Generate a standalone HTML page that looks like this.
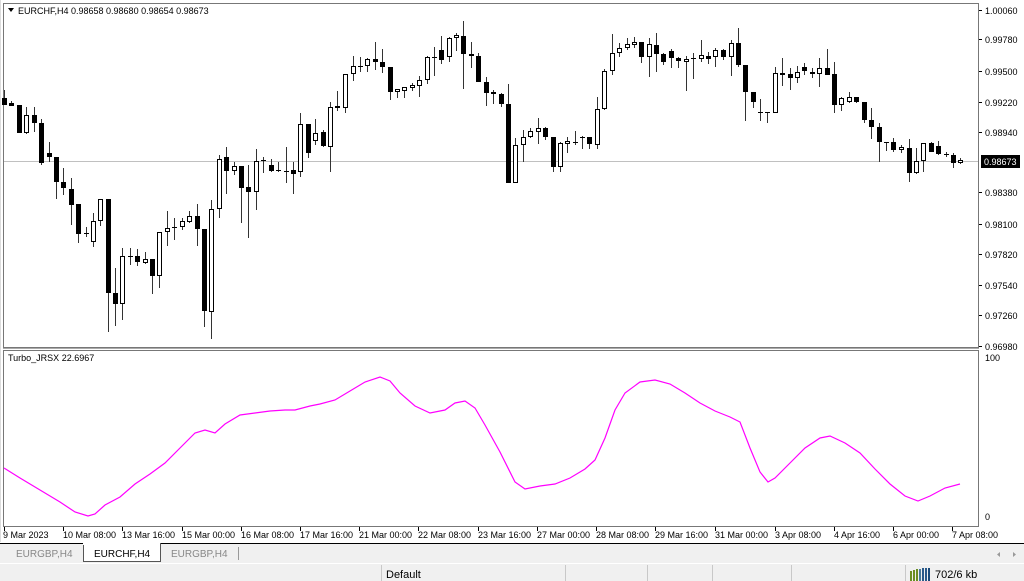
<!DOCTYPE html>
<html><head><meta charset="utf-8"><style>
html,body{margin:0;padding:0;width:1024px;height:581px;overflow:hidden;background:#fff;font-family:"Liberation Sans",sans-serif;}
svg{position:absolute;left:0;top:0}
</style></head><body>
<svg width="1024" height="581" viewBox="0 0 1024 581" xmlns="http://www.w3.org/2000/svg" font-family="Liberation Sans, sans-serif" font-size="9">
<rect x="0" y="0" width="1024" height="581" fill="#fff"/>
<rect x="3.5" y="3.5" width="975" height="344" fill="none" stroke="#777"/>
<rect x="3.5" y="350.5" width="975" height="176" fill="none" stroke="#777"/>
<line x1="3" y1="348.5" x2="979" y2="348.5" stroke="#aaa"/>
<line x1="0" y1="0" x2="0" y2="542" stroke="#bbb"/>
<line x1="4" y1="161.5" x2="978" y2="161.5" stroke="#c0c0c0"/>
<path stroke="#333" fill="none" d="M4.5 90V105M11.5 101V106M19.5 105V133M26.5 107V134M34.5 107V132M41.5 119V165M49.5 142V162M56.5 157V199M63.5 168V195M71.5 178V225M78.5 204V243M86.5 227V237M93.5 213V247M100.5 199V226M108.5 199V332M115.5 268V326M122.5 248V320M130.5 248V265M137.5 249V266M145.5 252V264M152.5 259V294M159.5 232V288M167.5 211V246M174.5 218V240M182.5 218V230M189.5 211V223M197.5 204V246M204.5 229V327M211.5 200V339M219.5 155V218M226.5 147V194M234.5 162V175M241.5 166V223M248.5 165V238M256.5 149V210M263.5 157V173M271.5 159V172M278.5 162V172M286.5 147V183M293.5 162V194M300.5 113V177M308.5 124V158M315.5 119V145M323.5 130V147M330.5 102V172M337.5 91V111M345.5 74V113M353.5 56V81M360.5 57V72M367.5 58V72M375.5 42V70M382.5 49V73M390.5 67V100M397.5 89V98M404.5 87V98M412.5 83V91M419.5 76V97M427.5 56V84M434.5 47V76M441.5 36V64M449.5 37V62M456.5 33V51M463.5 21V89M471.5 42V68M478.5 53V82M486.5 77V106M493.5 90V104M501.5 93V107M508.5 84V183M515.5 138V183M523.5 130V162M530.5 128V138M538.5 118V144M545.5 127V140M553.5 137V172M560.5 142V172M567.5 137V153M575.5 131V145M582.5 136V149M589.5 137V149M597.5 97V149M604.5 69V110M612.5 34V75M619.5 43V57M627.5 38V50M634.5 37V48M641.5 42V63M649.5 38V77M656.5 33V72M663.5 53V65M671.5 49V68M678.5 57V68M686.5 56V91M693.5 53V79M701.5 40V62M708.5 52V64M715.5 48V67M723.5 49V60M731.5 40V76M738.5 28V67M745.5 65V121M753.5 92V108M760.5 99V121M767.5 112V123M775.5 67V113M782.5 58V86M790.5 68V90M797.5 66V83M804.5 63V75M812.5 68V78M819.5 58V87M827.5 49V75M834.5 62V113M841.5 97V111M849.5 92V103M856.5 97V103M864.5 102V123M871.5 108V139M879.5 123V162M886.5 142V151M893.5 138V152M901.5 145V153M909.5 139V182M916.5 148V174M923.5 143V172M931.5 142V152M938.5 141V155M946.5 152V157M953.5 153V168M960.5 158V164"/>
<path fill="#000" d="M2 98h5v7h-5zM9 103h5v3h-5zM17 105h5v28h-5zM32 115h5v8h-5zM39 123h5v40h-5zM47 153h5v4h-5zM54 157h5v25h-5zM61 182h5v6h-5zM69 189h5v16h-5zM76 204h5v30h-5zM84 233h5v1h-5zM106 199h5v94h-5zM113 293h5v11h-5zM128 256h5v1h-5zM135 256h5v6h-5zM150 259h5v17h-5zM172 227h5v1h-5zM195 216h5v13h-5zM202 229h5v82h-5zM224 157h5v14h-5zM239 166h5v22h-5zM246 187h5v5h-5zM261 160h5v1h-5zM269 165h5v6h-5zM276 170h5v1h-5zM284 171h5v1h-5zM291 170h5v4h-5zM306 124h5v29h-5zM321 132h5v14h-5zM335 106h5v2h-5zM358 66h5v1h-5zM373 59h5v3h-5zM380 62h5v5h-5zM388 67h5v25h-5zM432 57h5v1h-5zM439 50h5v10h-5zM461 36h5v18h-5zM469 54h5v2h-5zM476 56h5v26h-5zM484 82h5v11h-5zM491 92h5v2h-5zM499 94h5v10h-5zM506 104h5v79h-5zM543 128h5v9h-5zM551 137h5v30h-5zM573 142h5v1h-5zM580 137h5v1h-5zM587 137h5v7h-5zM639 42h5v15h-5zM654 45h5v9h-5zM661 54h5v8h-5zM669 51h5v7h-5zM676 58h5v3h-5zM691 58h5v1h-5zM706 56h5v3h-5zM721 50h5v7h-5zM736 43h5v22h-5zM743 65h5v27h-5zM751 92h5v10h-5zM758 112h5v1h-5zM765 112h5v1h-5zM780 73h5v2h-5zM788 74h5v4h-5zM802 67h5v4h-5zM810 72h5v2h-5zM825 68h5v7h-5zM832 74h5v31h-5zM854 97h5v5h-5zM862 102h5v18h-5zM869 120h5v7h-5zM877 127h5v15h-5zM884 142h5v1h-5zM891 142h5v8h-5zM907 148h5v25h-5zM929 143h5v9h-5zM936 146h5v8h-5zM944 154h5v1h-5zM951 155h5v8h-5z"/>
<path fill="#fff" stroke="#000" d="M24.5 115.5h4v17h-4zM91.5 221.5h4v20h-4zM98.5 199.5h4v21h-4zM120.5 256.5h4v47h-4zM143.5 259.5h4v3h-4zM157.5 232.5h4v43h-4zM165.5 228.5h4v3h-4zM180.5 221.5h4v5h-4zM187.5 216.5h4v5h-4zM209.5 209.5h4v102h-4zM217.5 159.5h4v49h-4zM232.5 166.5h4v4h-4zM254.5 161.5h4v30h-4zM298.5 124.5h4v47h-4zM313.5 133.5h4v7h-4zM328.5 107.5h4v39h-4zM343.5 74.5h4v33h-4zM351.5 66.5h4v7h-4zM365.5 59.5h4v6h-4zM395.5 89.5h4v2h-4zM402.5 87.5h4v3h-4zM410.5 85.5h4v2h-4zM417.5 80.5h4v5h-4zM425.5 57.5h4v22h-4zM447.5 38.5h4v18h-4zM454.5 35.5h4v2h-4zM513.5 145.5h4v37h-4zM521.5 137.5h4v7h-4zM528.5 131.5h4v5h-4zM536.5 128.5h4v3h-4zM558.5 143.5h4v23h-4zM565.5 141.5h4v2h-4zM595.5 109.5h4v35h-4zM602.5 71.5h4v37h-4zM610.5 53.5h4v17h-4zM617.5 48.5h4v4h-4zM625.5 44.5h4v3h-4zM632.5 42.5h4v2h-4zM647.5 44.5h4v12h-4zM684.5 59.5h4v2h-4zM699.5 55.5h4v3h-4zM713.5 50.5h4v6h-4zM729.5 43.5h4v13h-4zM773.5 73.5h4v39h-4zM795.5 72.5h4v5h-4zM817.5 68.5h4v5h-4zM839.5 98.5h4v6h-4zM847.5 97.5h4v4h-4zM899.5 147.5h4v2h-4zM914.5 161.5h4v11h-4zM921.5 143.5h4v17h-4zM958.5 160.5h4v2h-4z"/>
<path d="M8 8h6l-3 4z" fill="#000"/>
<text x="18" y="14" fill="#000">EURCHF,H4  0.98658 0.98680 0.98654 0.98673</text>
<text x="8" y="361" fill="#000">Turbo_JRSX 22.6967</text>
<g fill="#000">
<text x="985" y="14">1.00060</text><text x="985" y="43">0.99780</text><text x="985" y="75">0.99500</text><text x="985" y="106">0.99220</text><text x="985" y="136">0.98940</text><text x="985" y="196">0.98380</text><text x="985" y="228">0.98100</text><text x="985" y="258">0.97820</text><text x="985" y="289">0.97540</text><text x="985" y="319">0.97260</text><text x="985" y="350">0.96980</text>
<text x="985" y="361">100</text><text x="985" y="520">0</text>
</g>
<path stroke="#000" d="M979 10.5h3M979 39.5h3M979 71.5h3M979 102.5h3M979 132.5h3M979 192.5h3M979 224.5h3M979 254.5h3M979 285.5h3M979 315.5h3M979 346.5h3"/>
<rect x="981" y="155" width="39" height="13" fill="#000"/>
<text x="984" y="165" fill="#fff">0.98673</text>
<polyline fill="none" stroke="#ff00ff" stroke-width="1.2" points="4,468 20,478 40,490 60,502 75,512 88,516 95,514 105,505 120,497 135,484 150,474 165,463 180,448 195,433 205,430 215,433 225,424 240,415 255,413 270,411 285,410 295,410 310,406 320,404 335,400 350,391 365,382 380,377 390,381 400,393 415,406 430,413 445,410 455,403 465,401 475,408 485,425 500,452 515,482 525,489 540,486 555,484 570,478 585,469 595,460 605,438 615,410 625,393 640,382 655,380 670,384 685,393 700,403 715,411 730,417 740,422 750,448 760,472 768,482 775,478 790,463 805,448 820,438 830,436 845,443 860,453 875,469 890,484 905,496 918,501 930,496 945,488 960,484"/>
<path stroke="#000" d="M4.5 527v4M63.5 527v4M122.5 527v4M182.5 527v4M241.5 527v4M300.5 527v4M359.5 527v4M418.5 527v4M478.5 527v4M537.5 527v4M596.5 527v4M655.5 527v4M715.5 527v4M775.5 527v4M834.5 527v4M893.5 527v4M952.5 527v4"/>
<g fill="#000">
<text x="3" y="538">9 Mar 2023</text><text x="63" y="538">10 Mar 08:00</text><text x="122" y="538">13 Mar 16:00</text><text x="182" y="538">15 Mar 00:00</text><text x="241" y="538">16 Mar 08:00</text><text x="300" y="538">17 Mar 16:00</text><text x="359" y="538">21 Mar 00:00</text><text x="418" y="538">22 Mar 08:00</text><text x="478" y="538">23 Mar 16:00</text><text x="537" y="538">27 Mar 00:00</text><text x="596" y="538">28 Mar 08:00</text><text x="655" y="538">29 Mar 16:00</text><text x="715" y="538">31 Mar 00:00</text><text x="775" y="538">3 Apr 08:00</text><text x="834" y="538">4 Apr 16:00</text><text x="893" y="538">6 Apr 00:00</text><text x="952" y="538">7 Apr 08:00</text>
</g>
<rect x="0" y="543" width="1024" height="20" fill="#f0f0f0"/>
<line x1="0" y1="543.5" x2="1024" y2="543.5" stroke="#000"/>
<rect x="83.5" y="543.5" width="77" height="18" fill="#fff" stroke="#555"/>
<rect x="83" y="543" width="77" height="2" fill="#fff"/>
<line x1="238.5" y1="547" x2="238.5" y2="560" stroke="#999"/>
<g font-size="10">
<text x="16" y="557" fill="#888">EURGBP,H4</text>
<text x="94" y="557" fill="#000">EURCHF,H4</text>
<text x="171" y="557" fill="#888">EURGBP,H4</text>
</g>
<path d="M1000 552l-3 2.5 3 2.5zM1013 552l3 2.5-3 2.5z" fill="#999"/>
<rect x="0" y="563" width="1024" height="18" fill="#f0f0f0"/>
<line x1="0" y1="563.5" x2="1024" y2="563.5" stroke="#fff"/>
<path stroke="#c8c8c8" d="M381.5 565v16M565.5 565v16M647.5 565v16M712.5 565v16M791.5 565v16M905.5 565v16"/>
<text x="386" y="578" font-size="11" fill="#000">Default</text>
<g>
<rect x="910" y="571" width="2" height="10" fill="#6b8e23"/><rect x="913" y="570" width="2" height="11" fill="#6b8e23"/><rect x="916" y="569" width="2" height="12" fill="#6b8e23"/><rect x="919" y="569" width="2" height="12" fill="#4a7a9a"/><rect x="922" y="568" width="2" height="13" fill="#2a5a8a"/><rect x="925" y="568" width="2" height="13" fill="#2a5a8a"/><rect x="928" y="568" width="2" height="13" fill="#1a4a7a"/>
</g>
<text x="935" y="578" font-size="11" fill="#000">702/6 kb</text>
</svg>
</body></html>
